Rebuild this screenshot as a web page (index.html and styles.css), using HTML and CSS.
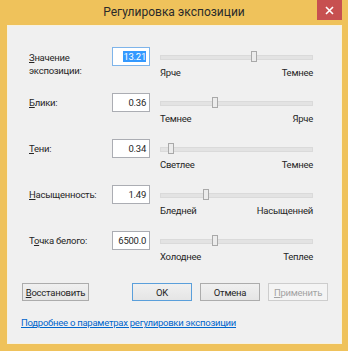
FILE: index.html
```html
<!DOCTYPE html>
<html lang="ru">
<head>
  <meta charset="UTF-8">
  <title>Регулировка экспозиции</title>
  <link rel="stylesheet" href="styles.css">
</head>
<body>

<div class="window">
  <div class="titlebar">
    <span class="title">Регулировка экспозиции</span>
    <span class="close">
      <svg width="9" height="9" viewBox="0 0 9 9"><path d="M1 1 L8 8 M8 1 L1 8" stroke="#fff" stroke-width="1.6" fill="none"/></svg>
    </span>
  </div>

  <div class="client">
    <div class="rows">
      <div class="row">
        <div class="label two-line"><u>З</u>начение<br>экспозиции:</div>
        <div class="field focused"><span class="sel">13.21</span></div>
        <div class="slider">
          <div class="track"><span class="thumb" style="left: 61.5%"></span></div>
          <div class="ends"><span>Ярче</span><span>Темнее</span></div>
        </div>
      </div>

      <div class="row">
        <div class="label"><u>Б</u>лики:</div>
        <div class="field">0.36</div>
        <div class="slider">
          <div class="track"><span class="thumb" style="left: 36%"></span></div>
          <div class="ends"><span>Темнее</span><span>Ярче</span></div>
        </div>
      </div>

      <div class="row">
        <div class="label"><u>Т</u>ени:</div>
        <div class="field">0.34</div>
        <div class="slider">
          <div class="track"><span class="thumb" style="left: 7.5%"></span></div>
          <div class="ends"><span>Светлее</span><span>Темнее</span></div>
        </div>
      </div>

      <div class="row">
        <div class="label"><u>Н</u>асыщенность:</div>
        <div class="field">1.49</div>
        <div class="slider">
          <div class="track"><span class="thumb" style="left: 30%"></span></div>
          <div class="ends"><span>Бледней</span><span>Насыщенней</span></div>
        </div>
      </div>

      <div class="row">
        <div class="label">Т<u>о</u>чка белого:</div>
        <div class="field">6500.0</div>
        <div class="slider">
          <div class="track"><span class="thumb" style="left: 36%"></span></div>
          <div class="ends"><span>Холоднее</span><span>Теплее</span></div>
        </div>
      </div>
    </div>

    <div class="buttons">
      <button class="btn reset"><u>В</u>осстановить</button>
      <button class="btn default">OK</button>
      <button class="btn">Отмена</button>
      <button class="btn" disabled><u>П</u>рименить</button>
    </div>

    <a class="more" href="#">Подробнее о параметрах регулировки экспозиции</a>
  </div>
</div>

</body>
</html>
```

FILE: styles.css
```css
* { margin: 0; padding: 0; box-sizing: border-box; }
body {
  font-family: Roboto, 'Liberation Sans', sans-serif;
  font-size: 9.5px;
  letter-spacing: -0.25px;
  color: #262626;
}
.window {
  width: 348px;
  height: 351px;
  background: #efc25b;
  display: flex;
  flex-direction: column;
  padding: 0 6px 7px 7px;
}
.titlebar {
  height: 25px;
  display: grid;
  grid-template-columns: 1fr auto 1fr;
  margin: 0 -6px 0 -7px;
}
.title {
  grid-column: 2;
  font-size: 12px;
  letter-spacing: 0;
  line-height: 25px;
  color: #2a2a2a;
}
.close {
  grid-column: 3;
  justify-self: end;
  width: 25px;
  height: 20px;
  margin-right: 6px;
  background: #c75050;
  display: flex;
  align-items: center;
  justify-content: center;
}
.client {
  flex: 1;
  background: #f0f0f0;
  border: 1px solid #f7f1df;
  padding: 0 13px;
}
.rows { padding: 21px 0 0 8px; }
.row {
  display: flex;
  align-items: flex-start;
  height: 46px;
}
.label {
  width: 83px;
  line-height: 19px;
}
.label.two-line {
  line-height: 13px;
  padding-top: 4px;
}
.field {
  width: 38px;
  height: 19px;
  background: #fff;
  border: 1px solid #abadb3;
  text-align: right;
  padding: 0 3px;
  line-height: 17px;
}
.field.focused { border-color: #7eb4ea; }
.sel {
  background: #3399ff;
  color: #fff;
}
.slider {
  width: 153px;
  margin-left: 10px;
}
.track {
  position: relative;
  height: 19px;
}
.track::before {
  content: "";
  position: absolute;
  left: 0;
  right: 0;
  top: 8px;
  height: 3px;
  background: #e3e3e3;
  border: 1px solid #dadada;
}
.thumb {
  position: absolute;
  top: 4px;
  width: 6px;
  height: 11px;
  margin-left: -3px;
  background: #ececec;
  border: 1px solid #a9a9a9;
}
.ends {
  display: flex;
  justify-content: space-between;
  line-height: 13px;
}
.buttons {
  display: flex;
  gap: 8px;
  margin-top: 6px;
}
.btn {
  width: 60px;
  height: 18px;
  font-family: inherit;
  font-size: 9.5px;
  letter-spacing: -0.25px;
  color: #262626;
  background: linear-gradient(#f0f0f0, #e5e5e5);
  border: 1px solid #acacac;
}
.btn.reset { width: 67px; margin-left: 1px; margin-right: auto; }
.btn.default { border-color: #5a9fdb; }
.btn:disabled {
  background: #f4f4f4;
  border-color: #cdcdcd;
  color: #a3a3a3;
}
.more {
  display: block;
  margin-top: 15px;
  line-height: 13px;
  color: #0066cc;
  text-decoration: underline;
}
```
